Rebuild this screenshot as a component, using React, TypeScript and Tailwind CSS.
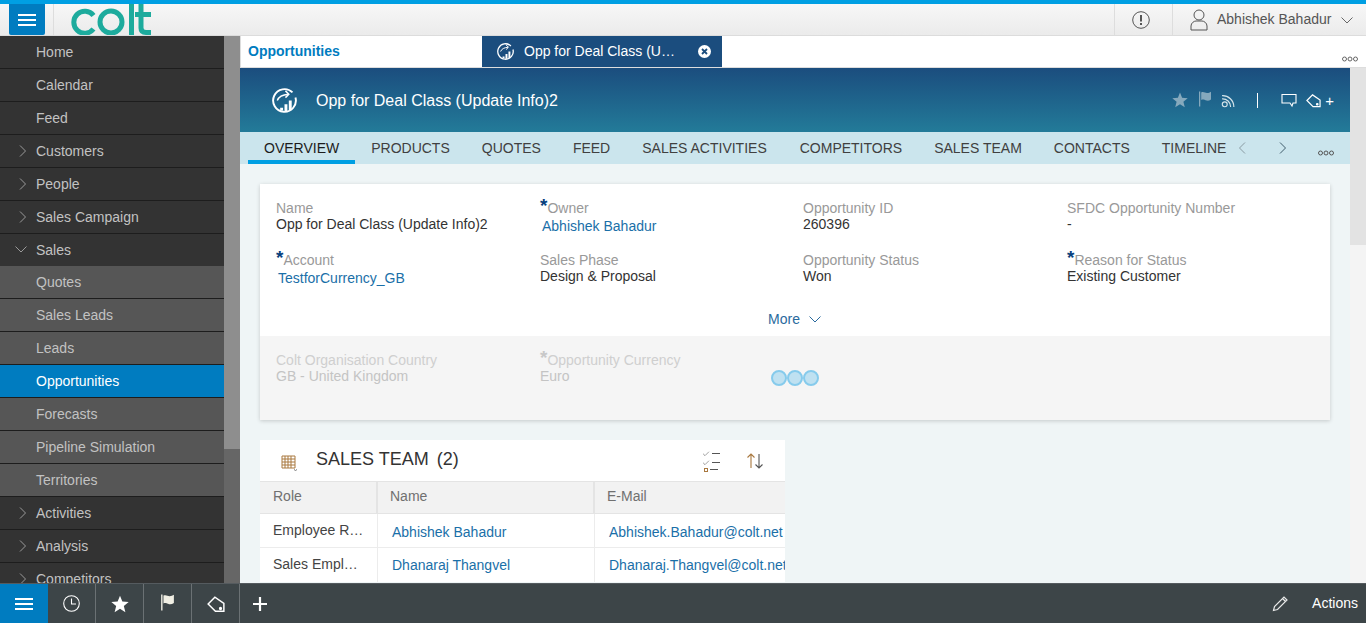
import { FC, ReactNode } from "react";
import { Check } from "lucide-react";

type NavItem = {
  label: string;
  arrow?: "right" | "down";
  sub?: boolean;
  active?: boolean;
};

const navItems: NavItem[] = [
  { label: "Home" },
  { label: "Calendar" },
  { label: "Feed" },
  { label: "Customers", arrow: "right" },
  { label: "People", arrow: "right" },
  { label: "Sales Campaign", arrow: "right" },
  { label: "Sales", arrow: "down" },
  { label: "Quotes", sub: true },
  { label: "Sales Leads", sub: true },
  { label: "Leads", sub: true },
  { label: "Opportunities", sub: true, active: true },
  { label: "Forecasts", sub: true },
  { label: "Pipeline Simulation", sub: true },
  { label: "Territories", sub: true },
  { label: "Activities", arrow: "right" },
  { label: "Analysis", arrow: "right" },
  { label: "Competitors", arrow: "right" },
];

const tabs = [
  "OVERVIEW",
  "PRODUCTS",
  "QUOTES",
  "FEED",
  "SALES ACTIVITIES",
  "COMPETITORS",
  "SALES TEAM",
  "CONTACTS",
  "TIMELINE",
];

const Chevron: FC<{ dir: "right" | "down" | "left"; className?: string }> = ({ dir, className }) => {
  const d =
    dir === "right" ? "M4 1.5 L9.5 7 L4 12.5" : dir === "left" ? "M10 1.5 L4.5 7 L10 12.5" : "M1.5 4.5 L7 10 L12.5 4.5";
  return (
    <svg width="14" height="14" viewBox="0 0 14 14" fill="none" stroke="currentColor" strokeWidth="1" className={className}>
      <path d={d} />
    </svg>
  );
};

const Dots: FC<{ className?: string }> = ({ className }) => (
  <svg width="16" height="6" viewBox="0 0 16 6" fill="none" stroke="currentColor" strokeWidth="1" className={className}>
    <circle cx="2.5" cy="3" r="2" />
    <circle cx="8" cy="3" r="2" />
    <circle cx="13.5" cy="3" r="2" />
  </svg>
);

const Burger: FC = () => (
  <div className="flex w-[18px] flex-col gap-[3px]">
    <div className="h-[2px] bg-white" />
    <div className="h-[2px] bg-white" />
    <div className="h-[2px] bg-white" />
  </div>
);

const OppIcon: FC<{ size: number }> = ({ size }) => (
  <svg width={size} height={size} viewBox="0 0 26 26" fill="none" stroke="white" strokeWidth="2">
    <path d="M21.300 4.600A11.800 11.800 0 1 0 24.400 9.900" />
    <path d="M5.500 13C7 9 11 7 17 6.500" strokeWidth="1.500" />
    <path d="M14 3L17.500 6.500L14 10" strokeWidth="1.500" />
    <path d="M10 23.500v-3M14.500 24v-7M19 23v-10" strokeWidth="3" />
  </svg>
);

const StarIcon: FC<{ size: number; color: string }> = ({ size, color }) => (
  <svg width={size} height={size} viewBox="0 0 16 16" fill={color}>
    <path d="M8 .6l2.100 5.200 5.600.4-4.300 3.600 1.400 5.500L8 12.300l-4.800 3 1.400-5.500L.3 6.200l5.600-.4z" />
  </svg>
);

const FlagIcon: FC<{ color: string; size?: number }> = ({ color, size = 16 }) => (
  <svg width={size} height={size} viewBox="0 0 14 16" fill={color}>
    <path d="M1 .5h1.300v15H1z" />
    <path d="M3.200 1.500C5.500 .3 7 2 9 2c1.500 0 2.800-.6 4-1.300v7.800C11.500 9.500 10 10 8.500 9.600 6.500 9 5 8 3.200 9z" />
  </svg>
);

const TagIcon: FC<{ color: string; size?: number }> = ({ color, size = 16 }) => (
  <svg width={size} height={size} viewBox="0 0 16 16" fill="none" stroke={color} strokeWidth="1.300">
    <path d="M1 8L7 2L15 7.500V14.500H7.500z" />
    <circle cx="12" cy="12" r=".8" fill={color} />
  </svg>
);

const Field: FC<{ label: string; required?: boolean; faded?: boolean; children: ReactNode; link?: boolean }> = ({
  label,
  required,
  faded,
  children,
  link,
}) => (
  <div className="text-[14px] leading-[16px]">
    <div className={`flex h-[16px] items-center ${faded ? "text-[#cfcfcf]" : "text-[#999999]"}`}>
      {required && (
        <span className={`relative top-[-2px] text-[19px] font-bold leading-[16px] ${faded ? "text-[#c8c8c8]" : "text-[#083f7d]"}`}>*</span>
      )}
      {label}
    </div>
    <div
      className={`${link ? "mt-[2px] pl-[2px] text-[#1a6fa8]" : faded ? "text-[#c4c4c4]" : "text-[#333333]"}`}
    >
      {children}
    </div>
  </div>
);

export default function App() {
  return (
    <div className="flex h-[623px] w-[1366px] flex-col overflow-hidden border-t-4 border-[#009fe3] bg-white font-['Liberation_Sans',Arial,sans-serif]">
      {/* top bar */}
      <header className="flex h-[32px] flex-none items-stretch border-b border-[#dcdcdc] bg-gradient-to-b from-[#f7f7f7] to-[#ebebeb]">
        <div className="ml-[9px] flex w-[36px] items-center justify-center rounded-b-[2px] bg-[#007cc0]">
          <Burger />
        </div>
        <div className="ml-[8px] w-px bg-[#dddddd]" />
        <svg width="90" height="31" viewBox="0 0 90 31" fill="none" stroke="#1dab9d" strokeWidth="5" className="ml-[12px]" role="img" aria-label="colt">
          <path d="M27.500 11.500A11 11 0 1 0 27.500 25" />
          <circle cx="45" cy="18" r="11" />
          <path d="M65.500 0V32" />
          <path d="M75 0V24Q75 28.500 80 28.500H85M69 10.500H85" />
        </svg>
        <div className="ml-auto flex w-[58px] items-center justify-center border-l border-[#dddddd] pr-[6px]">
          <svg width="18" height="18" viewBox="0 0 18 18" fill="none" stroke="#555555" strokeWidth="1">
            <circle cx="9" cy="9" r="8.300" />
            <path d="M9 4v6.500" strokeWidth="2" />
            <path d="M9 12v2" strokeWidth="2" />
          </svg>
        </div>
        <div className="flex w-[194px] items-center border-l border-[#dddddd] pl-[17px] text-[14px] text-[#555555]">
          <svg width="18" height="22" viewBox="0 0 18 22" fill="none" stroke="#555555" strokeWidth="1">
            <circle cx="9" cy="6" r="5" />
            <path d="M1 21v-4c0-3 3-5 5-5h6c2 0 5 2 5 5v4z" />
          </svg>
          <span className="ml-[9px]">Abhishek Bahadur</span>
          <Chevron dir="down" className="ml-[9px] text-[#666666]" />
        </div>
      </header>

      <div className="flex min-h-0 flex-1">
        {/* side nav */}
        <nav className="flex w-[240px] flex-none overflow-hidden">
          <ul className="h-full w-[224px] flex-none overflow-hidden bg-[#333333] text-[14px] text-[#c2c2c2]">
            {navItems.map((item) => (
              <li
                key={item.label}
                className={`relative flex flex-none items-center pl-[36px] ${
                  item.arrow === "down" ? "h-[32px]" : "h-[33px] border-b border-[#1d1d1d]"
                } ${item.active ? "bg-[#007cc0] text-white" : item.sub ? "bg-[#565656]" : ""}`}
              >
                {item.arrow === "right" && <Chevron dir="right" className="absolute left-[16px] top-[9px] text-[#9a9a9a]" />}
                {item.arrow === "down" && <Chevron dir="down" className="absolute left-[14px] top-[8px] text-[#9a9a9a]" />}
                {item.label}
              </li>
            ))}
          </ul>
          <div className="flex h-full w-[16px] flex-none flex-col bg-[#666666]">
            <div className="h-[413px] bg-[#8e8e8e]" />
          </div>
        </nav>

        {/* main */}
        <main className="flex min-w-0 flex-1 flex-col">
          <div className="flex h-[32px] flex-none items-stretch border-b border-[#dddddd]">
            <div className="flex w-[242px] flex-none items-center border-l border-[#dddddd] pl-[7px] text-[14px] font-bold text-[#007cc0]">
              Opportunities
            </div>
            <div className="flex w-[240px] flex-none items-center bg-[#1b4d7e] pl-[15px] text-[14px] text-white">
              <OppIcon size={17} />
              <span className="ml-[10px] w-[152px] whitespace-nowrap">Opp for Deal Class (U…</span>
              <svg width="13" height="13" viewBox="0 0 13 13" className="ml-[22px]">
                <circle cx="6.500" cy="6.500" r="6.500" fill="white" />
                <path d="M4 4l5 5M9 4l-5 5" stroke="#1b4d7e" strokeWidth="1.800" />
              </svg>
            </div>
            <div className="flex flex-1 items-end justify-end pb-[5px] pr-[8px] text-[#666666]">
              <Dots />
            </div>
          </div>

          <div className="flex min-h-0 flex-1">
            <div className="flex min-w-0 flex-1 flex-col overflow-hidden bg-[#eff5f6]">
              {/* object header */}
              <div className="flex h-[64px] flex-none items-center bg-gradient-to-b from-[#1b4d7e] to-[#237b99] pl-[32px] pr-[16px] text-white">
                <OppIcon size={25} />
                <span className="ml-[19px] pt-[2px] text-[16px]">Opp for Deal Class (Update Info)2</span>
                <div className="ml-auto flex items-center">
                  <StarIcon size={16} color="#86a9bd" />
                  <span className="ml-[9px] mt-[-3px]">
                    <FlagIcon color="#86a9bd" size={16} />
                  </span>
                  <svg width="15" height="15" viewBox="0 0 14 14" fill="none" stroke="#d5e4ea" strokeWidth="1.100" className="ml-[8px]">
                    <circle cx="3.500" cy="10.500" r="2.300" />
                    <path d="M1 5.500a7.500 7.500 0 0 1 8 7.500M1 2.500a10.500 10.500 0 0 1 11 10.500" />
                  </svg>
                  <div className="ml-[21px] h-[15px] w-px bg-white" />
                  <svg width="16" height="15" viewBox="0 0 16 15" fill="none" stroke="white" strokeWidth="1.100" className="ml-[23px]">
                    <path d="M1 1.500h14v8.500h-3l-1 3-2-3H1z" />
                  </svg>
                  <span className="ml-[9px]">
                    <TagIcon color="white" size={15} />
                  </span>
                  <span className="ml-[4px] text-[15px] leading-none">+</span>
                </div>
              </div>

              {/* tabs */}
              <div className="flex h-[32px] flex-none items-stretch bg-[#cbe5ed] pl-[8px] text-[14px] text-[#404040]">
                {tabs.map((tab, i) => (
                  <div
                    key={tab}
                    className={`flex items-center whitespace-nowrap pl-[16px] ${tab === "SALES ACTIVITIES" ? "pr-[17px]" : "pr-[16px]"} ${
                      i === 0 ? "border-b-4 border-[#009fe3] pt-[4px] text-[#1c1c1c]" : ""
                    }`}
                  >
                    {tab}
                  </div>
                ))}
                <div className="flex items-center text-[#8a9ba3]">
                  <Chevron dir="left" className="ml-[-7px]" />
                </div>
                <div className="flex items-center text-[#3f5c6b]">
                  <Chevron dir="right" className="ml-[27px]" />
                </div>
                <div className="flex items-end pb-[8px] text-[#555555]">
                  <Dots className="ml-[28px]" />
                </div>
              </div>

              {/* body */}
              <div className="px-[20px] pt-[20px]">
                <section className="h-[236px] w-[1070px] overflow-hidden bg-white shadow-[0_1px_4px_rgba(0,0,0,0.18)]">
                  <div className="grid grid-cols-[264px_263px_264px_1fr] gap-y-[18px] px-[16px] pt-[16px]">
                    <Field label="Name">Opp for Deal Class (Update Info)2</Field>
                    <Field label="Owner" required link>
                      Abhishek Bahadur
                    </Field>
                    <Field label="Opportunity ID">260396</Field>
                    <Field label="SFDC Opportunity Number">-</Field>
                    <Field label="Account" required link>
                      TestforCurrency_GB
                    </Field>
                    <Field label="Sales Phase">Design &amp; Proposal</Field>
                    <Field label="Opportunity Status">Won</Field>
                    <Field label="Reason for Status" required>
                      Existing Customer
                    </Field>
                  </div>
                  <div className="mt-[16px] flex h-[34px] items-center justify-center text-[14px] text-[#2a6a9e]">
                    More
                    <Chevron dir="down" className="ml-[8px]" />
                  </div>
                  <div className="relative h-[84px] bg-[#f5f5f5] px-[16px] pt-[16px]">
                    <div className="grid grid-cols-[264px_1fr]">
                      <Field label="Colt Organisation Country" faded>
                        GB - United Kingdom
                      </Field>
                      <Field label="Opportunity Currency" required faded>
                        Euro
                      </Field>
                    </div>
                    <div className="absolute left-[511px] top-[34px] flex">
                      <div className="h-[16px] w-[16px] rounded-full border-2 border-[#86cbec] bg-[#bfe1f1]" />
                      <div className="h-[16px] w-[16px] rounded-full border-2 border-[#86cbec] bg-[#bfe1f1]" />
                      <div className="h-[16px] w-[16px] rounded-full border-2 border-[#86cbec] bg-[#bfe1f1]" />
                    </div>
                  </div>
                </section>

                <section className="mt-[20px] w-[525px] bg-white">
                  <div className="flex h-[41px] items-center pb-[2px] pl-[19px] pr-[21px]">
                    <svg width="20" height="20" viewBox="0 0 20 20" fill="none" stroke="#a9783f" strokeWidth="1" className="mt-[2px]">
                      <path d="M3 5h13v12H3zM3 8h13M3 11h13M3 14h13M6 5v12M9 5v12M12 5v12" />
                      <path d="M15 18.500l1.500 1 1.500-1" stroke="#777777" />
                    </svg>
                    <span className="ml-[17px] text-[18px] text-[#333333]">SALES TEAM</span>
                    <span className="ml-[8px] text-[18px] text-[#333333]">(2)</span>
                    <div className="ml-auto mt-[2px] flex items-center gap-[26px] text-[#444444]">
                      <div className="flex flex-col gap-[1px]">
                        <div className="flex items-center gap-[2px]">
                          <Check size={8} strokeWidth={1.500} />
                          <div className="h-px w-[8px] bg-[#555555]" />
                        </div>
                        <div className="flex items-center gap-[2px]">
                          <Check size={8} strokeWidth={1.500} />
                          <div className="h-px w-[8px] bg-[#555555]" />
                        </div>
                        <div className="flex items-center gap-[2px]">
                          <div className="mx-[2px] h-[4px] w-[4px] border border-[#a9783f]" />
                          <div className="ml-[-2px] h-px w-[8px] bg-[#555555]" />
                        </div>
                      </div>
                      <svg width="18" height="18" viewBox="0 0 18 18" fill="none" strokeWidth="1.100">
                        <path d="M5 16V2M1.500 5.500L5 2l3.500 3.500" stroke="#a9783f" />
                        <path d="M13 2v14M9.500 12.500L13 16l3.500-3.500" stroke="#555555" />
                      </svg>
                    </div>
                  </div>
                  <div className="grid h-[33px] grid-cols-[118px_217px_1fr] border-y border-[#e4e4e4] bg-[#f2f2f2] text-[14px] text-[#707070]">
                    <div className="flex items-center border-r-2 border-[#e4e4e4] pb-[2px] pl-[13px]">Role</div>
                    <div className="flex items-center border-r-2 border-[#e4e4e4] pb-[2px] pl-[12px]">Name</div>
                    <div className="flex items-center pb-[2px] pl-[12px]">E-Mail</div>
                  </div>
                  <div className="grid h-[34px] grid-cols-[118px_217px_1fr] border-b border-[#ececec] text-[14px]">
                    <div className="flex items-center border-r border-[#ececec] pl-[13px] text-[#444444]">Employee R…</div>
                    <div className="flex items-center border-r border-[#ececec] pl-[14px] pt-[3px] text-[#1a6fa8]">Abhishek Bahadur</div>
                    <div className="flex items-center overflow-hidden whitespace-nowrap pl-[14px] pt-[3px] text-[#1a6fa8]">Abhishek.Bahadur@colt.net</div>
                  </div>
                  <div className="grid h-[34px] grid-cols-[118px_217px_1fr] text-[14px]">
                    <div className="flex items-center border-r border-[#ececec] pb-[2px] pl-[13px] text-[#444444]">Sales Empl…</div>
                    <div className="flex items-center border-r border-[#ececec] pl-[14px] text-[#1a6fa8]">Dhanaraj Thangvel</div>
                    <div className="flex items-center overflow-hidden whitespace-nowrap pl-[14px] text-[#1a6fa8]">Dhanaraj.Thangvel@colt.net</div>
                  </div>
                </section>
              </div>
            </div>
            <div className="flex w-[16px] flex-none flex-col bg-[#f4f4f4]">
              <div className="h-[177px] bg-[#e3e3e3]" />
            </div>
          </div>
        </main>
      </div>

      {/* bottom bar */}
      <footer className="flex h-[40px] flex-none items-stretch border-t border-[#555b5f] bg-[#3d4548] text-white">
        <div className="flex w-[48px] items-center justify-center bg-[#007cc0]">
          <Burger />
        </div>
        <div className="flex w-[48px] items-center justify-center border-r border-[#6b7174]">
          <svg width="17" height="17" viewBox="0 0 17 17" fill="none" stroke="white" strokeWidth="1.100">
            <circle cx="8.500" cy="8.500" r="7.800" />
            <path d="M8.500 3.500v5.500h4.500" />
          </svg>
        </div>
        <div className="flex w-[48px] items-center justify-center border-r border-[#6b7174]">
          <StarIcon size={18} color="white" />
        </div>
        <div className="flex w-[48px] items-center justify-center border-r border-[#6b7174] pb-[2px]">
          <FlagIcon color="#f1efe4" size={17} />
        </div>
        <div className="flex w-[48px] items-center justify-center border-r border-[#6b7174]">
          <TagIcon color="white" size={18} />
        </div>
        <div className="flex w-[40px] items-center justify-center">
          <svg width="16" height="16" viewBox="0 0 16 16" stroke="white" strokeWidth="2.200">
            <path d="M8 1v14M1 8h14" />
          </svg>
        </div>
        <div className="ml-auto flex items-center pr-[8px] text-[14px]">
          <svg width="17" height="17" viewBox="0 0 17 17" fill="none" stroke="#e8e8e8" strokeWidth="1.200">
            <path d="M1.500 15.500l1-4L12 2l3 3-9.500 9.500zM10.500 3.500l3 3" />
          </svg>
          <span className="ml-[23px]">Actions</span>
        </div>
      </footer>
    </div>
  );
}
